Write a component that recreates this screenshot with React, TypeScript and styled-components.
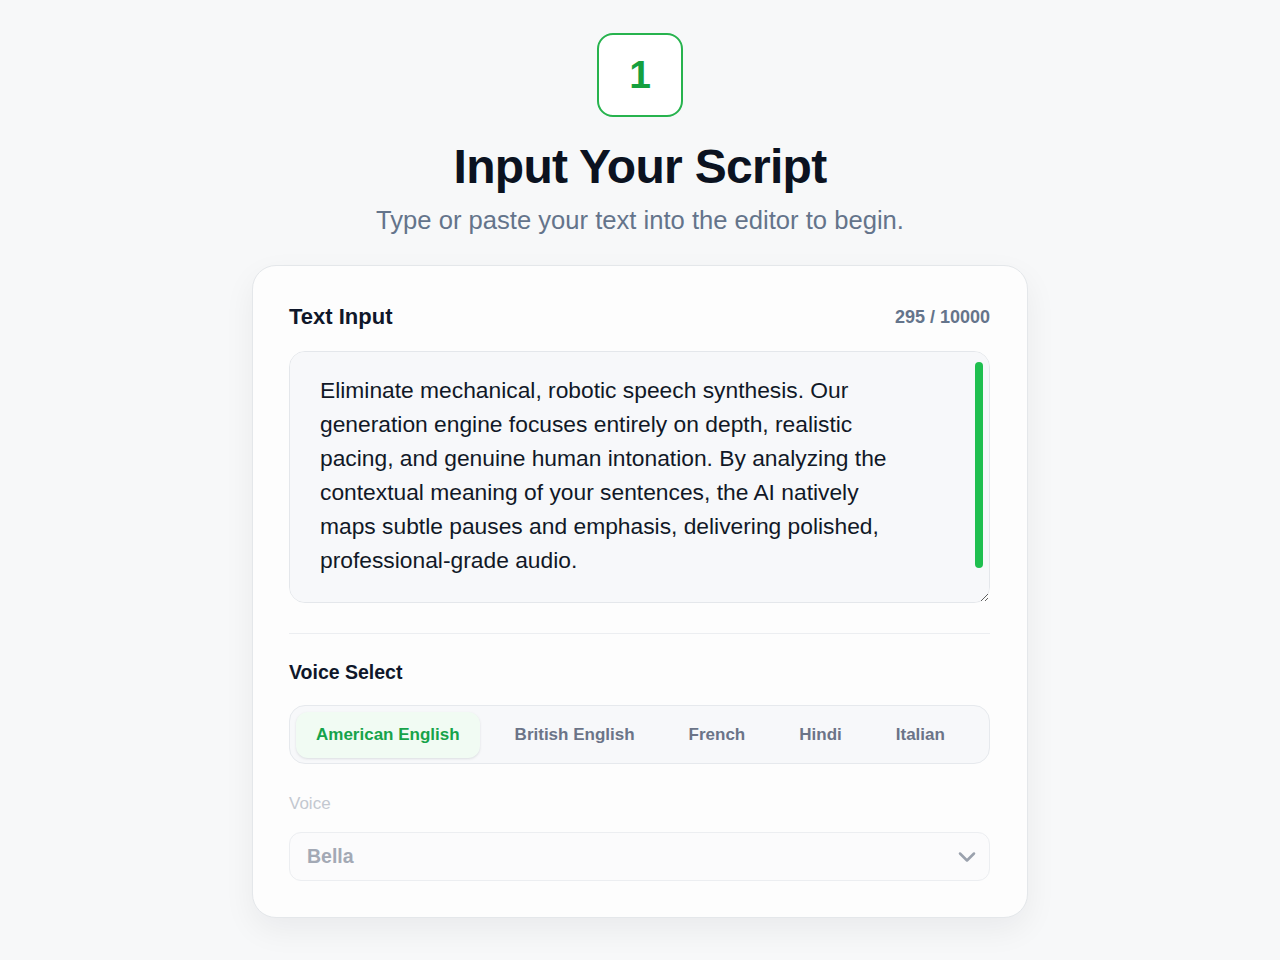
import { useState } from "react";
import styled, { createGlobalStyle } from "styled-components";
import { ChevronDown } from "lucide-react";

const GlobalStyle = createGlobalStyle`
  * {
    box-sizing: border-box;
  }
  body {
    margin: 0;
    background: #f7f8f9;
    font-family: "Liberation Sans", Arial, sans-serif;
    color: #0f172a;
  }
`;

const Page = styled.div`
  min-height: 960px;
  display: flex;
  flex-direction: column;
  align-items: center;
  padding-top: 33px;
`;

const StepBadge = styled.div`
  width: 86px;
  height: 84px;
  border: 2px solid #27b34e;
  border-radius: 16px;
  background: #fff;
  display: flex;
  align-items: center;
  justify-content: center;
  font-size: 39px;
  font-weight: 700;
  color: #15a03f;
`;

const Title = styled.h1`
  margin: 21px 0 0;
  font-size: 48px;
  line-height: 58px;
  font-weight: 700;
  letter-spacing: -0.7px;
  color: #0b1220;
`;

const Subtitle = styled.p`
  margin: 7px 0 0;
  font-size: 25.6px;
  line-height: 34px;
  color: #64748b;
`;

const Card = styled.section`
  margin-top: 28px;
  width: 776px;
  background: #fdfdfd;
  border: 1px solid #e4e7ea;
  border-radius: 24px;
  box-shadow: 0 12px 32px rgba(15, 23, 42, 0.06);
  padding: 37px 37px 36px 36px;
  display: flex;
  flex-direction: column;
`;

const HeaderRow = styled.div`
  display: flex;
  justify-content: space-between;
  align-items: center;
  height: 26px;
  padding-top: 2px;
`;

const SectionTitle = styled.h2<{ $size?: number }>`
  margin: 0;
  font-size: ${(p) => p.$size ?? 22}px;
  font-weight: 700;
  color: #0f172a;
`;

const Counter = styled.span`
  font-size: 18px;
  font-weight: 700;
  color: #64748b;
`;

const EditorWrap = styled.div`
  position: relative;
  margin-top: 22px;
`;

const Editor = styled.textarea`
  display: block;
  width: 100%;
  height: 252px;
  resize: vertical;
  border: 1px solid #e4e7eb;
  border-radius: 16px;
  background: #f7f8fa;
  padding: 21px 70px 34px 30px;
  font-family: "Liberation Sans", Arial, sans-serif;
  font-size: 22.8px;
  line-height: 34px;
  color: #111827;
  outline: none;
`;

/* custom scroll thumb drawn over the editor's right edge */
const ScrollThumb = styled.div`
  position: absolute;
  top: 11px;
  right: 7px;
  width: 8px;
  height: 206px;
  border-radius: 4px;
  background: #1fbf4f;
  pointer-events: none;
`;

const Divider = styled.hr`
  margin: 30px 0 0;
  border: none;
  border-top: 1px solid #eceef1;
`;

const VoiceHeader = styled.div`
  margin-top: 26px;
  height: 24px;
  display: flex;
  align-items: center;
`;

const Tabs = styled.div`
  margin-top: 21px;
  height: 59px;
  display: flex;
  align-items: center;
  gap: 16px;
  padding: 0 6px;
  background: #f7f8fa;
  border: 1px solid #e6e9ed;
  border-radius: 16px;
`;

const Tab = styled.button<{ $active?: boolean }>`
  height: 46px;
  padding: 0 ${(p) => (p.$active ? 20 : 19)}px;
  border: none;
  border-radius: 12px;
  font-family: "Liberation Sans", Arial, sans-serif;
  font-size: 17px;
  font-weight: 700;
  cursor: pointer;
  background: ${(p) => (p.$active ? "#f1fbf3" : "transparent")};
  color: ${(p) => (p.$active ? "#16a34a" : "#6b7488")};
  box-shadow: ${(p) =>
    p.$active ? "0 1px 3px rgba(15, 23, 42, 0.08), 0 1px 2px rgba(15, 23, 42, 0.04)" : "none"};
`;

const FieldLabel = styled.label`
  margin-top: 30px;
  height: 20px;
  line-height: 20px;
  font-size: 17px;
  color: #c3c8d0;
`;

const Select = styled.div`
  margin-top: 18px;
  height: 49px;
  border: 1px solid #eceef1;
  border-radius: 12px;
  background: #fbfbfc;
  display: flex;
  align-items: center;
  justify-content: space-between;
  padding: 0 8px 0 17px;
  font-size: 19.5px;
  font-weight: 700;
  color: #a3a9b5;
`;

const SCRIPT =
  "Eliminate mechanical, robotic speech synthesis. Our generation engine focuses entirely on depth, realistic pacing, and genuine human intonation. By analyzing the contextual meaning of your sentences, the AI natively maps subtle pauses and emphasis, delivering polished, professional-grade audio.";

const LANGUAGES = ["American English", "British English", "French", "Hindi", "Italian"];

export default function App() {
  const [text, setText] = useState(SCRIPT);
  const [lang, setLang] = useState(LANGUAGES[0]);

  return (
    <>
      <GlobalStyle />
      <Page>
        <StepBadge>1</StepBadge>
        <Title>Input Your Script</Title>
        <Subtitle>Type or paste your text into the editor to begin.</Subtitle>

        <Card>
          <HeaderRow>
            <SectionTitle>Text Input</SectionTitle>
            <Counter>{text.length} / 10000</Counter>
          </HeaderRow>
          <EditorWrap>
            <Editor value={text} onChange={(e) => setText(e.target.value)} spellCheck={false} />
            <ScrollThumb />
          </EditorWrap>

          <Divider />

          <VoiceHeader>
            <SectionTitle $size={19.5}>Voice Select</SectionTitle>
          </VoiceHeader>
          <Tabs>
            {LANGUAGES.map((l) => (
              <Tab key={l} $active={l === lang} onClick={() => setLang(l)}>
                {l}
              </Tab>
            ))}
          </Tabs>

          <FieldLabel>Voice</FieldLabel>
          <Select>
            Bella
            <ChevronDown size={28} color="#9aa1ad" strokeWidth={2.2} />
          </Select>
        </Card>
      </Page>
    </>
  );
}
